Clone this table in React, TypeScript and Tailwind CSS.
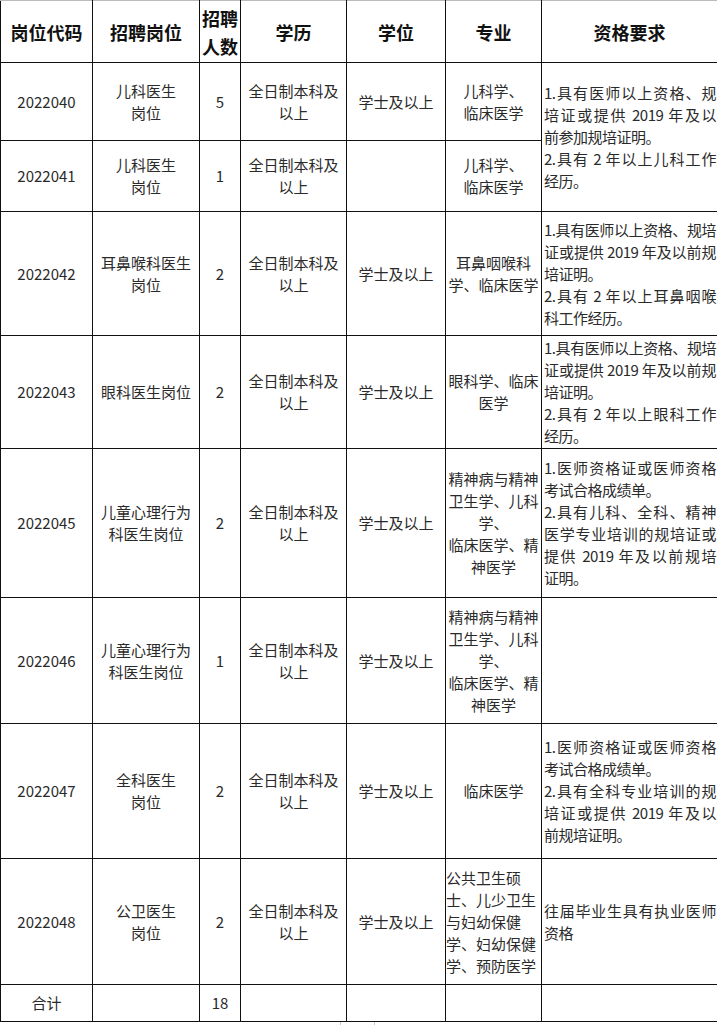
import React from 'react';

type Row = {
  code: string;
  post: string[];
  num: string;
  degree: string;
  major: string[];
  majorLeft?: boolean;
  req?: string[];
  reqSpan?: number;
  h: number;
};

const edu = ['全日制本科及', '以上'];

const rows: Row[] = [
  {
    code: '2022040',
    post: ['儿科医生', '岗位'],
    num: '5',
    degree: '学士及以上',
    major: ['儿科学、', '临床医学'],
    req: ['1.具有医师以上资格、规', '培证或提供 2019 年及以', '前参加规培证明。', '2.具有 2 年以上儿科工作', '经历。'],
    reqSpan: 2,
    h: 78,
  },
  {
    code: '2022041',
    post: ['儿科医生', '岗位'],
    num: '1',
    degree: '',
    major: ['儿科学、', '临床医学'],
    h: 71,
  },
  {
    code: '2022042',
    post: ['耳鼻喉科医生', '岗位'],
    num: '2',
    degree: '学士及以上',
    major: ['耳鼻咽喉科', '学、临床医学'],
    req: ['1.具有医师以上资格、规培', '证或提供 2019 年及以前规', '培证明。', '2.具有 2 年以上耳鼻咽喉', '科工作经历。'],
    h: 124,
  },
  {
    code: '2022043',
    post: ['眼科医生岗位'],
    num: '2',
    degree: '学士及以上',
    major: ['眼科学、临床', '医学'],
    req: ['1.具有医师以上资格、规培', '证或提供 2019 年及以前规', '培证明。', '2.具有 2 年以上眼科工作', '经历。'],
    h: 113,
  },
  {
    code: '2022045',
    post: ['儿童心理行为', '科医生岗位'],
    num: '2',
    degree: '学士及以上',
    major: ['精神病与精神', '卫生学、儿科', '学、', '临床医学、精', '神医学'],
    req: ['1.医师资格证或医师资格', '考试合格成绩单。', '2.具有儿科、全科、精神', '医学专业培训的规培证或', '提供 2019 年及以前规培', '证明。'],
    h: 149,
  },
  {
    code: '2022046',
    post: ['儿童心理行为', '科医生岗位'],
    num: '1',
    degree: '学士及以上',
    major: ['精神病与精神', '卫生学、儿科', '学、', '临床医学、精', '神医学'],
    req: [],
    h: 126,
  },
  {
    code: '2022047',
    post: ['全科医生', '岗位'],
    num: '2',
    degree: '学士及以上',
    major: ['临床医学'],
    req: ['1.医师资格证或医师资格', '考试合格成绩单。', '2.具有全科专业培训的规', '培证或提供 2019 年及以', '前规培证明。'],
    h: 135,
  },
  {
    code: '2022048',
    post: ['公卫医生', '岗位'],
    num: '2',
    degree: '学士及以上',
    major: ['公共卫生硕', '士、儿少卫生', '与妇幼保健', '学、妇幼保健', '学、预防医学'],
    majorLeft: true,
    req: ['往届毕业生具有执业医师', '资格'],
    h: 126,
  },
];

const cell = 'border border-[#111] align-middle p-0';

function Lines({ lines, justify }: { lines: string[]; justify?: boolean }) {
  return (
    <>
      {lines.map((l, i) => {
        // full lines of the requirement column run to the right edge
        const full = justify && i < lines.length - 1 && !l.endsWith('。');
        return (
          <div key={i} className={`whitespace-nowrap ${full ? '[text-align-last:justify]' : ''}`}>
            {l}
          </div>
        );
      })}
    </>
  );
}

export default function App() {
  return (
    <div
      className="w-[717px] bg-white text-[#2a2a2a]"
      style={{ fontFamily: '"Noto Sans CJK SC", "Noto Sans", sans-serif' }}
    >
      <table className="table-fixed border-collapse w-[717px] text-[15px] leading-[22px]">
        <colgroup>
          <col className="w-[92px]" />
          <col className="w-[107px]" />
          <col className="w-[41px]" />
          <col className="w-[106px]" />
          <col className="w-[99px]" />
          <col className="w-[96px]" />
          <col className="w-[176px]" />
        </colgroup>
        <thead>
          <tr className="h-[62px] text-[18px] font-bold leading-[28px] text-[#111]">
            <th className={`${cell} border-t-[#bbb]`}>岗位代码</th>
            <th className={`${cell} border-t-[#bbb]`}>招聘岗位</th>
            <th className={`${cell} border-t-[#bbb]`}>
              <div>招聘</div>
              <div>人数</div>
            </th>
            <th className={`${cell} border-t-[#bbb]`}>学历</th>
            <th className={`${cell} border-t-[#bbb]`}>学位</th>
            <th className={`${cell} border-t-[#bbb]`}>专业</th>
            <th className={`${cell} border-t-[#bbb]`}>资格要求</th>
          </tr>
        </thead>
        <tbody>
          {rows.map((r) => (
            <tr key={r.code} style={{ height: r.h }}>
              <td className={`${cell} text-center`}>{r.code}</td>
              <td className={`${cell} text-center`}>
                <Lines lines={r.post} />
              </td>
              <td className={`${cell} text-center`}>{r.num}</td>
              <td className={`${cell} text-center`}>
                <Lines lines={edu} />
              </td>
              <td className={`${cell} text-center`}>{r.degree}</td>
              <td className={`${cell} ${r.majorLeft ? 'text-left' : 'text-center'}`}>
                <Lines lines={r.major} />
              </td>
              {r.req && (
                <td className={`${cell} text-left pl-[2px] pr-[1px] tracking-[-0.5px]`} rowSpan={r.reqSpan ?? 1}>
                  <Lines lines={r.req} justify />
                </td>
              )}
            </tr>
          ))}
          <tr className="h-[37px]">
            <td className={`${cell} text-center`}>合计</td>
            <td className={cell}></td>
            <td className={`${cell} text-center`}>18</td>
            <td className={cell}></td>
            <td className={cell}></td>
            <td className={cell}></td>
            <td className={cell}></td>
          </tr>
        </tbody>
      </table>
      <div className="ml-[340px] h-[4px] w-[35px] border-x border-[#ccc]" />
    </div>
  );
}
